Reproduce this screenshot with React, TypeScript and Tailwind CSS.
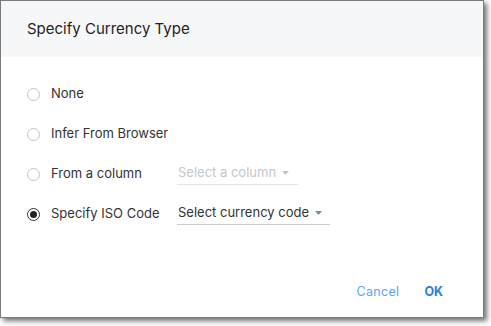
import { useState } from 'react'

type Mode = 'none' | 'browser' | 'column' | 'iso'

const options: { id: Mode; label: string }[] = [
  { id: 'none', label: 'None' },
  { id: 'browser', label: 'Infer From Browser' },
  { id: 'column', label: 'From a column' },
  { id: 'iso', label: 'Specify ISO Code' },
]

function Radio({ checked }: { checked: boolean }) {
  return (
    <span className={`flex h-[13px] w-[13px] items-center justify-center rounded-full border ${checked ? 'border-[#333]' : 'border-[#c4c4c4]'}`}>
      {checked && <span className="h-[7px] w-[7px] rounded-full bg-[#222]" />}
    </span>
  )
}

function Caret({ className }: { className: string }) {
  return (
    <svg className={className} width="7" height="4" viewBox="0 0 7 4">
      <path d="M0 0h7L3.5 4z" fill="currentColor" />
    </svg>
  )
}

export default function App() {
  const [mode, setMode] = useState<Mode>('iso')

  return (
    <div className="h-[326px] w-[491px] bg-white" style={{ fontFamily: 'Inter, "Liberation Sans", sans-serif' }}>
      <div className="flex h-[318px] w-[484px] flex-col border border-[#7a7a7a] bg-white shadow-[3px_3px_5px_rgba(0,0,0,0.55)]">
        {/* Header */}
        <div className="flex h-[56px] items-center bg-[#f6f7f9] pl-[26px] text-[15px] text-[#1e1e1e]">
          Specify Currency Type
        </div>

        {/* Options */}
        <div className="flex flex-1 flex-col gap-[18px] pl-[26px] pt-[26px]">
          {options.map((opt) => (
            <div key={opt.id} className="flex h-[22px] items-center">
              <button onClick={() => setMode(opt.id)} className="flex w-[150px] items-center gap-[11px] text-[13px] text-[#333]">
                <Radio checked={mode === opt.id} />
                {opt.label}
              </button>
              {opt.id === 'column' && (
                <div className="flex w-[121px] items-center gap-[6px] border-b border-[#e3e5e8] pb-[2px] pl-[1px] text-[13px] text-[#c3c7cc]">
                  Select a column
                  <Caret className="text-[#c3c7cc]" />
                </div>
              )}
              {opt.id === 'iso' && (
                <div className="flex w-[153px] items-center gap-[6px] border-b border-[#c9ccd1] pb-[2px] pl-[1px] text-[13px] text-[#333]">
                  Select currency code
                  <Caret className="text-[#888]" />
                </div>
              )}
            </div>
          ))}
        </div>

        {/* Footer */}
        <div className="flex h-[52px] items-start justify-end gap-[25px] pr-[40px] pt-[18px] text-[12.5px]">
          <button className="tracking-[0.3px] text-[#5ba8ec]">Cancel</button>
          <button className="font-bold text-[#2d7fd3]">OK</button>
        </div>
      </div>
    </div>
  )
}
